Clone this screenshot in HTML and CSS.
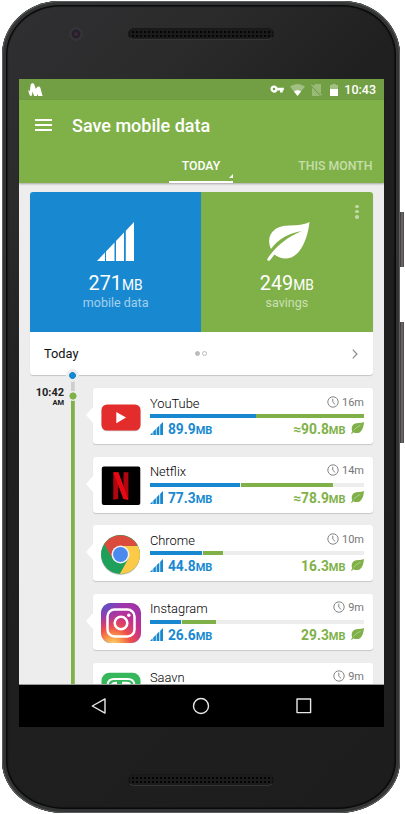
FILE: index.html
```html
<!DOCTYPE html>
<html lang="en">
<head>
<meta charset="utf-8">
<title>Save mobile data</title>
<link rel="stylesheet" href="styles.css">
</head>
<body>
<svg class="defs" width="0" height="0" aria-hidden="true">
  <defs>
    <symbol id="bars" viewBox="0 0 37 39">
      <path d="M0 39 8 30.500V39ZM9 29.500 17.500 20.500V39H9ZM19 19 27 10.500V39H19ZM28.800 8.700 37 0V39H28.800Z"/>
    </symbol>
    <symbol id="bars-small" viewBox="0 0 13 13">
      <path d="M0 13 2.600 10.300V13ZM3.300 9.600 5.900 6.900V13H3.300ZM6.600 6.300 9.300 3.600V13H6.600ZM10.200 2.700 13 0V13H10.200Z"/>
    </symbol>
    <symbol id="leaf" viewBox="0 0 43 39">
      <path d="M42.500 0C41.500 10 38 22 32 29.500 25 38 15 38.500 7.500 32.500L3 38.200C1.500 39.600-.500 38 .600 36.500 8 25 20 15 35 9 22 11 11 17 4 27 .500 19 2 12 8 7.500 17 .500 31 6 42.500 0Z"/>
    </symbol>
    <symbol id="leaf-small" viewBox="0 0 13 12">
      <path d="M13 0C12.700 4.500 11.300 8.500 9 10.200 7 11.500 4 11.300 2.300 10.200L.8 12 .1 11.300 1.200 9.400C.2 6.500 .6 3.600 3 2 5.500.400 10 1.300 13 0Z"/>
      <path d="M2.500 8.400Q5 5.200 9.600 3.200" fill="none" stroke="#fff" stroke-width=".35"/>
    </symbol>
    <symbol id="clock" viewBox="0 0 12 12">
      <circle cx="6" cy="6" r="5.200" fill="none" stroke="#858585" stroke-width="1"/>
      <path d="M5.800 2.700V6.200L8.200 8.500" fill="none" stroke="#858585" stroke-width="1"/>
    </symbol>
  </defs>
</svg>
<div class="device">
  <div class="rocker power"></div>
  <div class="rocker volume"></div>
  <div class="shell">
    <div class="top-bezel"><span class="camera"></span><span class="speaker"></span></div>
    <div class="screen">
      <div class="status">
        <svg class="app-mark" viewBox="0 0 15 13"><path d="M0 7 1.800 8.200 2.600 2C3 0 5.500-.300 6.200 1.300L7.800 6 8.800 4.400C9.800 3.200 11.800 3.200 12.400 5L14.600 13H10.200L9.600 11 8.800 13H6L4.600 8.500 4 12C3.500 13.300 2.300 13.200 1.600 12Z" fill="#fff"/></svg>
        <svg class="key" viewBox="0 0 14 8"><path fill="#fff" fill-rule="evenodd" d="M4 .4A3.600 3.600 0 0 1 7.400 2.700H13.800V5.400H12.700V7.600H10.100V5.400H7.400A3.600 3.600 0 1 1 4 .4ZM4 2.700A1.300 1.300 0 1 0 4 5.300 1.300 1.300 0 0 0 4 2.700Z"/></svg>
        <svg class="wifi" viewBox="0 0 15 12"><path d="M0 2.600Q7.500-2.600 15 2.600L7.500 12Z" fill="#fff" opacity=".35"/><path d="M4 7.400Q7.500 5 11 7.400L7.500 12Z" fill="#fff"/></svg>
        <svg class="sim" viewBox="0 0 11 12"><path d="M4 0H10V9.700L2.500 2ZM1 3.600 9.200 12H1Z" fill="#fff" opacity=".28"/><path d="M.4.700 10.700 11.500" stroke="#fff" opacity=".5" stroke-width=".9"/></svg>
        <svg class="battery" viewBox="0 0 8 12"><path d="M2.300 0H5.700V1H8V5H0V1H2.300Z" fill="#fff" opacity=".35"/><path d="M0 5H8V12H0Z" fill="#fff"/></svg>
        <span class="clock-time">10:43</span>
      </div>
      <header class="appbar">
        <div class="title-row">
          <div class="menu"><i></i><i></i><i></i></div>
          <h1>Save mobile data</h1>
        </div>
        <nav class="tabs">
          <span class="tab active">TODAY</span>
          <span class="tab month">THIS MONTH</span>
        </nav>
      </header>
      <main class="content">
        <section class="summary">
          <div class="tiles">
            <div class="tile blue">
              <svg class="tile-icon bars-big"><use href="#bars"/></svg>
              <div class="amount">271<small>MB</small></div>
              <div class="label">mobile data</div>
            </div>
            <div class="tile green">
              <svg class="tile-icon leaf-big"><use href="#leaf"/></svg>
              <div class="amount">249<small>MB</small></div>
              <div class="label">savings</div>
              <div class="more"><i></i><i></i><i></i></div>
            </div>
          </div>
          <div class="period">
            <span>Today</span>
            <span class="pager"><i class="on"></i><i></i></span>
            <svg class="chevron" viewBox="0 0 6 10"><path d="M.8.600 4.900 5 .8 9.400" fill="none" stroke="#8d8d8d" stroke-width="1.300"/></svg>
          </div>
        </section>
        <section class="feed">
          <div class="time">10:42<small>AM</small></div>
          <div class="rail"><i class="dot start"></i><i class="dot now"></i></div>
          <div class="apps">
            <article class="app">
              <svg class="logo" viewBox="0 0 40 40"><rect x=".5" y="7.300" width="39" height="26" rx="5.500" fill="#c9c9c9"/><rect x=".5" y="6.500" width="39" height="26" rx="5.500" fill="#e32d2c"/><path d="M15.300 14 25 19.600 15.300 25.300Z" fill="#fff"/></svg>
              <div class="info">
                <div class="line"><span class="name">YouTube</span><span class="dur"><svg><use href="#clock"/></svg>16m</span></div>
                <div class="meter"><b style="width:49.500%"></b><u style="width:50.200%"></u></div>
                <div class="line values"><span class="used"><svg><use href="#bars-small"/></svg>89.9<small>MB</small></span><span class="saved">≈90.8<small>MB</small><svg><use href="#leaf-small"/></svg></span></div>
              </div>
            </article>
            <article class="app">
              <svg class="logo" viewBox="0 0 40 40"><rect x=".8" y=".5" width="38.500" height="38.500" rx="2" fill="#000"/><path d="M12.300 6.300H17.200V33L12.300 33.700ZM22.500 6.300H27.400V33.700L22.500 33Z" fill="#b1060f"/><path d="M12.300 6.300H17.500L27.400 33.700 22.300 33Z" fill="#e50914"/></svg>
              <div class="info">
                <div class="line"><span class="name">Netflix</span><span class="dur"><svg><use href="#clock"/></svg>14m</span></div>
                <div class="meter"><b style="width:42.300%"></b><u style="width:43.300%"></u></div>
                <div class="line values"><span class="used"><svg><use href="#bars-small"/></svg>77.3<small>MB</small></span><span class="saved">≈78.9<small>MB</small><svg><use href="#leaf-small"/></svg></span></div>
              </div>
            </article>
            <article class="app">
              <svg class="logo" viewBox="0 0 40 40"><circle cx="19.500" cy="20.300" r="19.600" fill="#c5c5c5"/><circle cx="19.500" cy="19.500" r="19.500" fill="#1fa05a"/><path d="M3.200 9A19.500 19.500 0 0 1 36 9.300L35 11H19.500L11.500 23.500Z" fill="#da4b3d"/><path d="M19.500 11H37A19.500 19.500 0 0 1 18.800 39L27.500 23.500Z" fill="#fdca47"/><circle cx="19.500" cy="19.500" r="9" fill="#f2f2f2"/><circle cx="19.500" cy="19.500" r="7.400" fill="#4a89ee"/></svg>
              <div class="info">
                <div class="line"><span class="name">Chrome</span><span class="dur"><svg><use href="#clock"/></svg>10m</span></div>
                <div class="meter"><b style="width:24.500%"></b><u style="width:9.200%"></u></div>
                <div class="line values"><span class="used"><svg><use href="#bars-small"/></svg>44.8<small>MB</small></span><span class="saved">16.3<small>MB</small><svg><use href="#leaf-small"/></svg></span></div>
              </div>
            </article>
            <article class="app">
              <svg class="logo" viewBox="0 0 40 40"><defs><radialGradient id="warm" cx=".3" cy="1.050" r="1"><stop offset="0" stop-color="#ffd776"/><stop offset=".2" stop-color="#f9a14b"/><stop offset=".45" stop-color="#ee4e4b"/><stop offset=".75" stop-color="#c5308f"/><stop offset="1" stop-color="#a234a8"/></radialGradient><radialGradient id="cool" cx="0" cy="0" r=".65"><stop offset="0" stop-color="#455fd0"/><stop offset="1" stop-color="#7a3fc0" stop-opacity="0"/></radialGradient></defs><rect x="0" y="0" width="40" height="40.500" rx="10" fill="#bbb"/><rect width="40" height="40" rx="10" fill="url(#warm)"/><rect width="40" height="40" rx="10" fill="url(#cool)"/><rect x="6.500" y="6.500" width="27" height="27" rx="7" fill="none" stroke="#fff" stroke-width="2.500"/><circle cx="20" cy="20" r="6.300" fill="none" stroke="#fff" stroke-width="2.600"/><circle cx="27.800" cy="12.300" r="1.700" fill="#fff"/></svg>
              <div class="info">
                <div class="line"><span class="name">Instagram</span><span class="dur"><svg><use href="#clock"/></svg>9m</span></div>
                <div class="meter"><b style="width:14.500%"></b><u style="width:16.200%"></u></div>
                <div class="line values"><span class="used"><svg><use href="#bars-small"/></svg>26.6<small>MB</small></span><span class="saved">29.3<small>MB</small><svg><use href="#leaf-small"/></svg></span></div>
              </div>
            </article>
            <article class="app last">
              <svg class="logo" viewBox="0 0 40 40"><rect x=".5" y=".7" width="39" height="39" rx="8" fill="#37b75c"/><path d="M6.500 22V14Q6.500 7 13 7H27Q33.500 7 33.500 14V22" fill="none" stroke="#fff" stroke-width="2"/><path d="M10.500 22V15.500Q10.500 11 15 11H16M21 11H26Q29.500 11 29.500 15" fill="none" stroke="#fff" stroke-width="2.600"/></svg>
              <div class="info">
                <div class="line"><span class="name">Saavn</span><span class="dur"><svg><use href="#clock"/></svg>9m</span></div>
              </div>
            </article>
          </div>
        </section>
      </main>
      <div class="navbar">
        <svg viewBox="0 0 18 18"><path d="M2.300 9 15 1.900V16.100Z"/></svg>
        <svg viewBox="0 0 18 18"><circle cx="9" cy="9" r="7.500"/></svg>
        <svg viewBox="0 0 18 18"><rect x="2" y="2" width="13.600" height="13.600"/></svg>
      </div>
    </div>
    <div class="bottom-bezel"><span class="speaker"></span></div>
  </div>
</div>
</body>
</html>
```
FILE: styles.css
```css
* { box-sizing: border-box; }
html, body { margin: 0; background: #fff; }
body { width: 405px; height: 814px; overflow: hidden; font-family: Roboto, "Liberation Sans", sans-serif; }
svg { display: block; flex: none; }
.defs { position: absolute; }
i { display: block; }

.device { position: relative; width: 405px; height: 814px; padding: 1px 5px 1px 2px; }
.rocker { position: absolute; right: 1px; width: 5px; background: linear-gradient(90deg, #444 40%, #777072 55%, #4a4647); }
.power { top: 212px; height: 55px; }
.volume { top: 322px; height: 121px; }
.shell {
  position: relative;
  height: 812px;
  border-radius: 58px 58px 62px 62px / 54px 54px 52px 52px;
  background: linear-gradient(135deg, #303032 0%, #2b2b2c 18%, #202020 35%, #1d1d1e 100%);
  box-shadow: inset 0 0 0 1px #5b5e5c, inset 0 0 0 4px #333435, inset 0 0 1px 5.500px #090909;
  padding: 0 17px;
}
.top-bezel { height: 78px; padding: 27px 0 0 50px; display: flex; align-items: flex-start; }
.camera { width: 14px; height: 14px; margin: -1px 46px 0 0; border-radius: 50%; background: radial-gradient(circle, #3a2a33 0 1px, #211c2a 3.500px, #343436 5px 6.500px, #303032 7px); }
.speaker { width: 146px; height: 12px; border-radius: 6px; background: radial-gradient(circle, #030303 .7px, transparent 1.100px) 2px 1px / 4px 4px, #1b1b1b; border: 1px solid #191919; border-bottom-color: #353535; }
.top-bezel .speaker { margin-left: -1px; }
.bottom-bezel { height: 86px; display: flex; justify-content: center; padding: 47px 0 0; }

.screen { width: 364.500px; height: 648px; display: flex; flex-direction: column; background: #000; }
.status { height: 21px; flex: none; background: #729f43; display: flex; align-items: center; padding: 0 7.500px 0 8.500px; color: #fff; }
.app-mark { width: 15px; height: 13px; margin-right: auto; }
.key { width: 14px; height: 8px; margin: -1px 6px 0 0; }
.wifi { width: 15px; height: 12px; margin-right: 6px; }
.sim { width: 11px; height: 12px; margin-right: 8px; }
.battery { width: 8px; height: 12px; margin-right: 6.500px; }
.clock-time { font-size: 12.500px; font-weight: 500; line-height: 21px; }

.appbar { height: 83px; flex: none; background: #80b149; color: #fff; position: relative; z-index: 2; box-shadow: 0 1px 2px rgba(0,0,0,.3); display: flex; flex-direction: column; }
.title-row { height: 50px; display: flex; align-items: center; padding-left: 16px; }
.menu { width: 17px; display: grid; gap: 3px; margin: -1px 20px 0 0; }
.menu i { height: 2px; background: #fff; }
h1 { margin: 1px 0 0; font-size: 18px; font-weight: 500; line-height: 24px; white-space: nowrap; }
.tabs { flex: 1; display: flex; font-size: 12.300px; font-weight: 500; line-height: 16px; }
.tab { padding-top: 8px; white-space: nowrap; }
.tab.active { position: relative; width: 64px; margin-left: 150px; text-align: center; border-bottom: 2px solid #fff; }
.tab.active::after { content: ""; position: absolute; right: 0; bottom: 3px; border: solid transparent; border-width: 2px; border-right-color: #fff; border-bottom-color: #fff; }
.month { margin-left: auto; padding-right: 11px; color: #c7deab; }

.content { flex: 1; min-height: 0; overflow: hidden; background: #ededed; padding: 9px 11px 0; border-bottom: 1px solid #999; }
.summary { height: 183px; border-radius: 3px; background: #fff; box-shadow: 0 1px 1px rgba(0,0,0,.17); }
.tiles { height: 140px; display: grid; grid-template-columns: 1fr 1fr; color: #fff; border-radius: 3px 3px 0 0; overflow: hidden; }
.tile { position: relative; display: flex; flex-direction: column; align-items: center; padding-top: 29.500px; }
.blue { background: #1889d1; }
.green { background: #80b149; }
.tile-icon { fill: #fff; height: 39px; }
.bars-big { width: 37px; }
.leaf-big { width: 43px; margin-left: 3px; }
.amount { font-size: 19.800px; line-height: 24px; margin-top: 11.500px; }
.amount small { font-size: 13.800px; }
.label { font-size: 12.500px; line-height: 16px; margin-top: -2.500px; color: #a3d0ed; }
.green .label { color: #cce0b6; }
.more { position: absolute; right: 14px; top: 12.500px; display: grid; gap: 1.800px; }
.more i { width: 3.600px; height: 3.600px; border-radius: 50%; background: #c0d9a2; }
.period { height: 43px; display: grid; grid-template-columns: 1fr auto 1fr; align-items: center; padding: 0 15px 0 14px; font-size: 12.800px; color: #111; }
.pager { display: flex; gap: 2px; }
.pager i { width: 5px; height: 5px; border-radius: 50%; border: 1px solid #bbb; }
.pager .on { background: #bbb; }
.chevron { width: 6px; height: 10px; justify-self: end; }

.feed { display: grid; grid-template-columns: 34px 17px 1fr; height: 400px; }
.time { padding-top: 11.600px; text-align: right; font-size: 11px; font-weight: 700; line-height: 12px; color: #222; white-space: nowrap; }
.time small { display: block; font-size: 7.500px; line-height: 8px; }
.rail { position: relative; display: flex; justify-content: center; background: linear-gradient(#cecece 0 16px, #ededed 16px 25px, #80b149 25px) center / 3.800px 100% no-repeat; }
.dot { position: absolute; border-radius: 50%; }
.start { top: -6.500px; width: 13px; height: 13px; background: radial-gradient(circle, #1889d1 3.100px, #ededed 3.700px); }
.now { top: 15.500px; width: 10px; height: 10px; background: radial-gradient(circle, #80b149 3.200px, #ededed 3.900px); }
.apps { padding: 13.200px 0 0 12.400px; display: flex; flex-direction: column; gap: 12.600px; }
.app { position: relative; height: 56px; flex: none; display: flex; padding: 0 9px 0 8px; background: #fff; border-radius: 3px; box-shadow: 0 1px 1px rgba(0,0,0,.16); }
.app::before { content: ""; position: absolute; left: -7px; top: 19px; border: solid transparent; border-width: 8px 7px 8px 0; border-right-color: #fff; }
.app.last::before { display: none; }
.logo { width: 40px; height: 40px; margin: 9.500px 8.500px 0 0; }
.info { flex: 1; min-width: 0; }
.line { display: flex; justify-content: space-between; align-items: center; height: 16px; }
.info > .line:first-child { height: 26px; padding-top: 4px; }
.name { font-size: 12.900px; font-weight: 300; color: #000; }
.dur { display: flex; align-items: center; gap: 3px; font-size: 11px; color: #777; margin: -2px -.5px 0 0; }
.dur svg { width: 12px; height: 12px; margin-top: -1px; }
.meter { height: 4px; display: flex; gap: .7px; background: #ededed; }
.meter b { background: #1889d1; }
.meter u { background: #80b149; }
.values { font-size: 13.800px; font-weight: 700; height: 22px; }
.values span { display: flex; align-items: baseline; }
.values small { font-size: 11px; }
.used { color: #1889d1; }
.saved { color: #80b149; }
.used svg { width: 13px; height: 13px; fill: #1889d1; margin-right: 5px; align-self: center; margin-top: -1px; }
.saved svg { width: 13px; height: 12px; fill: #80b149; margin-left: 5px; align-self: center; margin-top: -2px; }

.navbar { height: 42px; flex: none; background: #000; display: flex; justify-content: space-between; padding: 12px 71px 0; }
.navbar svg { width: 18px; height: 18px; fill: none; stroke: #e8e8e8; stroke-width: 1.400; stroke-linejoin: round; }
```
